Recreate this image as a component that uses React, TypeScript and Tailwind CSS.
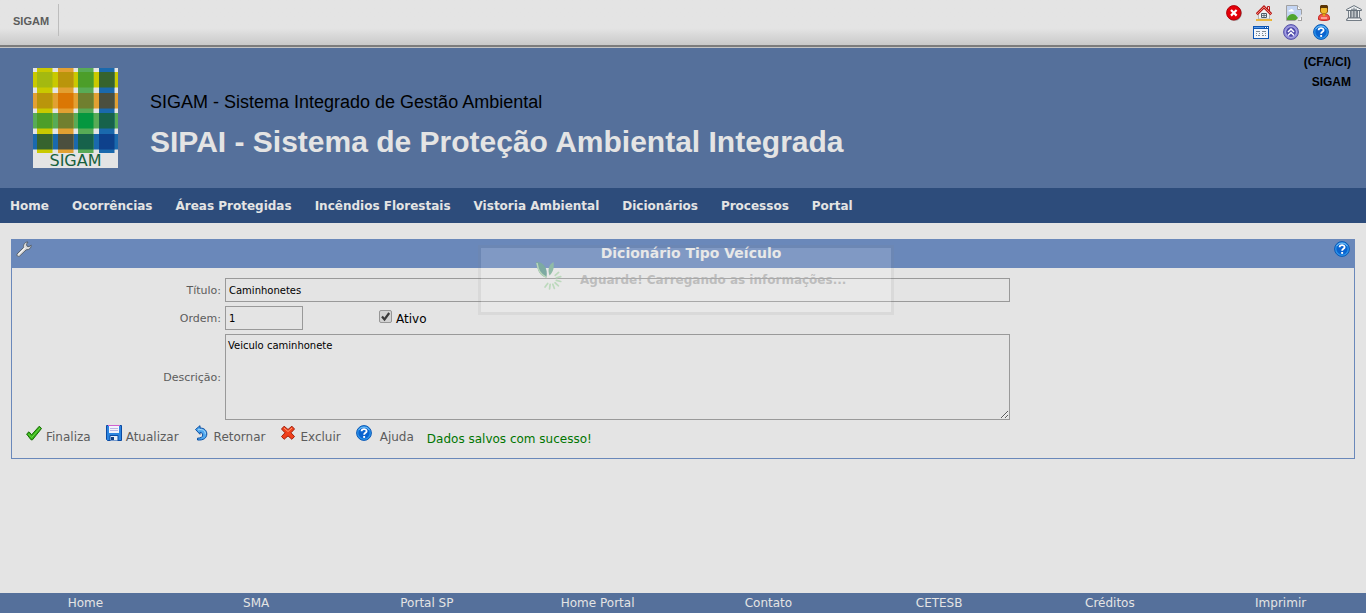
import React from "react";

type IconProps = { className?: string };

const svgBase = {
  width: 16,
  height: 16,
  viewBox: "0 0 16 16",
  fill: "none",
  "aria-hidden": true,
} as const;

function CloseIcon() {
  return (
    <svg {...svgBase}>
      <circle cx="8.4" cy="8.4" r="7.4" fill="#999" />
      <circle cx="7.800" cy="7.800" r="7.200" fill="#e40008" stroke="#b00008" />
      <path d="M5 5l5.600 5.600M10.600 5L5 10.600" stroke="#fff" strokeWidth="2.200" />
    </svg>
  );
}

function HouseIcon() {
  return (
    <svg {...svgBase}>
      <path d="M2.500 8L8 3l5.500 5v6h-11z" fill="#f2f2f2" stroke="#b4b4b4" />
      <path d="M11.500 1.500h2V6l-2-2z" fill="#f8d4d4" stroke="#b51c1c" />
      <path d="M.7 9.300L8 2l7.300 7.300" stroke="#b51c1c" strokeWidth="2.800" />
      <path d="M1 9L8 2l7 7" stroke="#f47a6c" strokeWidth="1" />
      <path d="M5.500 8.500h5v4h-5z" fill="#e6edf2" stroke="#4e5c68" />
      <path d="M8 8.500v4M5.500 10.500h5" stroke="#4e5c68" strokeWidth=".8" />
      <path d="M0 15h16" stroke="#eab02a" strokeWidth="1.800" />
    </svg>
  );
}

function BrokenImageIcon() {
  return (
    <svg {...svgBase}>
      <path d="M.500.500h11l4 4v11H.500z" fill="#c3d4f2" stroke="#a0a0a0" />
      <path d="M11.500.500v4h4" fill="#fafafa" stroke="#a0a0a0" />
      <path d="M2.500 6.500c-.3-1.500 1-1.700 1.500-1.500.6-1.500 2.700-1.300 3 .2 1.200 0 1.300 1.300.6 1.300z" fill="#fff" />
      <path d="M1 13c2-3.600 5.500-5 8.500-3l3 3.500V15H1z" fill="#4fa52f" />
      <path d="M9 16l7-7v2.500L11.500 16z" fill="#e4e4e4" />
      <path d="M12 15.500h3.500V12" fill="#fafafa" stroke="#a0a0a0" />
    </svg>
  );
}

function UserIcon() {
  return (
    <svg {...svgBase}>
      <path d="M2.500 14.500c-.2-3.600 1-5 3-5h5c2 0 3.200 1.400 3 5-2 1.300-9 1.300-11 0z" fill="#f0554c" stroke="#c4231f" />
      <path d="M4.500 2.500h7V6c0 1.500-1 2.500-2 2.500h-3c-1 0-2-1-2-2.500z" fill="#efb92c" stroke="#8f5408" />
      <path d="M4 4V1.500C4 .700 4.800 0 5.800 0h4.400c1 0 1.800.7 1.800 1.500V4l-1.500-1h-5z" fill="#5a3506" />
      <path d="M6.500 8.500h3v1.800L8 11.500l-1.500-1.200z" fill="#e0a11c" />
      <path d="M5 13h6" stroke="#ffb6ae" strokeWidth="1.500" />
    </svg>
  );
}

function BankIcon() {
  return (
    <svg {...svgBase}>
      <path d="M.500 5.500v-1L8 .600l7.500 3.900v1z" fill="#f2f4f5" stroke="#66717b" />
      <path d="M5 4.300h6M8 2.500v2" stroke="#7d8790" />
      <path d="M2.500 6v7h2V6M5.800 6v7h1.600V6M8.800 6v7h1.600V6M11.500 6v7h2V6" fill="#e9ecee" stroke="#66717b" strokeWidth=".9" />
      <path d="M1.500 13h13v1.200h1v1.300H.500v-1.300h1z" fill="#f2f4f5" stroke="#66717b" strokeWidth=".9" />
    </svg>
  );
}

function WindowIcon() {
  return (
    <svg {...svgBase} shapeRendering="crispEdges">
      <path d="M0 2h16v13H0z" fill="#0b55b4" />
      <path d="M1 5h14v9H1z" fill="#f2f6fb" />
      <path d="M1 3h10v1H1z" fill="#5a9be8" />
      <path d="M12 3h1v1h-1zM14 3h1v1h-1z" fill="#fff" />
      <path d="M3 7.500h4M9 7.500h4M3 9.500h1M6 9.500h1M9 9.500h1M12 9.500h1M3 11.500h1M5 11.500h2M9 11.500h2M12 11.500h1" stroke="#7d8a93" />
    </svg>
  );
}

function ChevronsUpIcon() {
  return (
    <svg {...svgBase}>
      <circle cx="8" cy="8" r="7.400" fill="#8f8bd8" stroke="#5450a8" />
      <circle cx="8" cy="8" r="5.400" fill="#504bab" stroke="#b4b1ee" />
      <path d="M5 8l3-3 3 3M5 11.500l3-3 3 3" stroke="#fff" strokeWidth="1.500" />
    </svg>
  );
}

function HelpIcon({ className }: IconProps) {
  return (
    <svg {...svgBase} className={className}>
      <circle cx="8" cy="8" r="7.400" fill="#2a93ea" stroke="#0b57b5" />
      <circle cx="8" cy="8" r="5.600" fill="#0a63cf" />
      <path d="M2.800 5C4.500 1.300 11.500 1.300 13.200 5" stroke="#7cc4f6" />
      <path d="M5.600 6.300C5.600 3.400 10.600 3.400 10.600 6.200 10.600 7.900 8.100 7.700 8.100 9.800" stroke="#fff" strokeWidth="1.800" />
      <path d="M7.200 11h1.900v1.900H7.200z" fill="#fff" />
    </svg>
  );
}

function WrenchIcon() {
  return (
    <svg {...svgBase}>
      <path
        d="M1 13l6.500-6.500C7 3.500 9 .8 12 1L10.500 3.200l.5 2 2 .5L15.200 4c.3 3-2 5-5 4.800L3.500 15.200C2 16 0 14.500 1 13z"
        fill="#dadada"
        stroke="#59636f"
      />
      <path d="M2.500 13.500l7-7" stroke="#fff" strokeWidth=".8" />
    </svg>
  );
}

function CheckIcon() {
  return (
    <svg {...svgBase}>
      <path d="M.6 9L3 6.800l2.600 3L13.300 1.200l2.200 2.300L6.500 14.800H5z" fill="#36b416" stroke="#176a06" />
      <path d="M2.500 9l3.200 3.500L14 3" stroke="#7ee05a" strokeWidth=".8" />
    </svg>
  );
}

function DiskIcon() {
  return (
    <svg {...svgBase}>
      <path d="M.500.500h15v15h-14l-1-1z" fill="#2b84e0" stroke="#0b4aa2" />
      <path d="M3 0h10v8H3z" fill="#f3f2fb" />
      <path d="M2 .5h12" stroke="#d060d0" />
      <path d="M4 3.500h8M4 5.500h8" stroke="#b9b6e4" />
      <path d="M4 10.500h8V16H4z" fill="#e8eef8" stroke="#0b4aa2" />
      <path d="M5 12h3v3H5z" fill="#123f84" />
    </svg>
  );
}

function ReturnIcon() {
  return (
    <svg {...svgBase}>
      <path
        d="M1.500 4.500L6 .700v2.300c4.500 0 6.800 2.800 6.800 6 0 4-3.300 6.500-9.300 6v-1.800c3.600-.2 5.200-1.200 5.200-3.200 0-1.500-1-2.600-2.700-2.700v2z"
        fill="#4fa8ee"
        stroke="#0b4fa4"
      />
      <path d="M4 4.800c5-1 7.500 1 7.300 4.500" stroke="#b6defb" strokeWidth=".9" />
    </svg>
  );
}

function DeleteIcon() {
  return (
    <svg {...svgBase}>
      <path
        d="M4.100 1.200L8 4.500l3.900-3.300L14.500 4 11 7.800l3.500 3.700-2.600 2.800L8 10.900l-3.900 3.400-2.600-2.800L5 7.800 1.500 4z"
        fill="#f0401c"
        stroke="#a3200c"
        strokeLinejoin="round"
      />
      <path d="M4 3l4 3.500L12 3" stroke="#ff9c74" />
    </svg>
  );
}

function LeafSpinner() {
  const rays = [-35, -8, 20, 48, 76, 104, 132];
  return (
    <svg width="28" height="28" viewBox="0 0 28 28" aria-hidden="true">
      <path d="M0 0c8 0 12 6 10.500 15.500C3.500 14 1.500 8 0 0z" fill="#7daaa2" />
      <path d="M1 1c1 7 3 11 9.500 14.500" stroke="#b9d6b9" strokeWidth="1.500" fill="none" />
      <path d="M17.500 0c-5 3-6 8-4 13.500C17 10 18.500 6 17.500 0z" fill="#8fbba6" />
      {rays.map((angle) => (
        <path
          key={angle}
          d="M20.500 16.500L25 16"
          stroke="#bcd9bc"
          strokeWidth="1.700"
          strokeLinecap="round"
          transform={`rotate(${angle} 15 17)`}
        />
      ))}
    </svg>
  );
}

const stripes = [
  { pos: 4, color: "#c9c900" },
  { pos: 25, color: "#e2a032" },
  { pos: 45, color: "#58ab56" },
  { pos: 66, color: "#1a69ad" },
];

const crossings = [
  ["#a4b910", "#ba950b", "#4c9e29", "#36632e"],
  ["#ba950b", "#db7704", "#707f2f", "#4b4f3e"],
  ["#4c9e29", "#707f2f", "#05973f", "#17624b"],
  ["#36632e", "#4b4f3e", "#17624b", "#0e418c"],
];

function Logo() {
  return (
    <div className="h-[100px] w-[85px] bg-[#e4e4e4]">
      <svg width="85" height="85" viewBox="0 0 85 85" className="block" aria-hidden="true">
        {stripes.map((s) => (
          <rect key={`h${s.pos}`} x="0" y={s.pos} width="85" height="15.500" fill={s.color} />
        ))}
        {stripes.map((s) => (
          <rect key={`v${s.pos}`} x={s.pos} y="0" width="15.500" height="85" fill={s.color} />
        ))}
        {crossings.map((row, r) =>
          row.map((color, c) => (
            <rect
              key={`${r}-${c}`}
              x={stripes[c].pos}
              y={stripes[r].pos}
              width="15.500"
              height="15.500"
              fill={color}
            />
          )),
        )}
      </svg>
      <p className="text-center font-['DejaVu_Sans',sans-serif] text-base leading-4 text-[#17603c]">SIGAM</p>
    </div>
  );
}

const menu = [
  "Home",
  "Ocorrências",
  "Áreas Protegidas",
  "Incêndios Florestais",
  "Vistoria Ambiental",
  "Dicionários",
  "Processos",
  "Portal",
];

const footerLinks = ["Home", "SMA", "Portal SP", "Home Portal", "Contato", "CETESB", "Créditos", "Imprimir"];

const toolbar = [
  [
    { label: "Sair", icon: <CloseIcon /> },
    { label: "Início", icon: <HouseIcon /> },
    { label: "Imagem", icon: <BrokenImageIcon /> },
    { label: "Usuário", icon: <UserIcon /> },
    { label: "Instituição", icon: <BankIcon /> },
  ],
  [
    { label: "Janela", icon: <WindowIcon /> },
    { label: "Recolher", icon: <ChevronsUpIcon /> },
    { label: "Ajuda", icon: <HelpIcon /> },
  ],
];

const actions = [
  { label: "Finaliza", icon: <CheckIcon /> },
  { label: "Atualizar", icon: <DiskIcon /> },
  { label: "Retornar", icon: <ReturnIcon /> },
  { label: "Excluir", icon: <DeleteIcon /> },
  { label: "Ajuda", icon: <HelpIcon className="mr-1" /> },
];

const fieldClass = "border border-[#999] bg-[#e4e4e4] text-[10px] text-black outline-none";

export default function App() {
  return (
    <div className="flex min-h-screen flex-col bg-[#e4e4e4] font-['DejaVu_Sans',sans-serif] text-xs text-[#5c5c5c]">
      <header className="flex h-12 items-start justify-between border-b border-[#c4c4c4] bg-linear-to-b from-[#e4e4e4] from-60% to-[#c6c6c6] font-['Liberation_Sans',sans-serif] shadow-[inset_0_-2px_0_#7c7c7c]">
        <div className="mt-1 flex h-8 items-center border-r border-[#bdbdbd] pr-[9px] pl-[13px] text-[11px] font-bold">
          <a href="#sigam" className="pt-0.5">SIGAM</a>
        </div>
        <div className="flex flex-col items-end gap-[3px] pt-[5px] pr-1">
          {toolbar.map((row, i) => (
            <div key={i} className={i === 0 ? "flex gap-3.5" : "flex gap-3.5 pr-[33px]"}>
              {row.map((item) => (
                <button key={item.label} type="button" aria-label={item.label}>
                  {item.icon}
                </button>
              ))}
            </div>
          ))}
        </div>
      </header>

      <section className="flex h-[140px] items-start justify-between bg-[#55709b] pr-[15px] pl-[33px] font-['Liberation_Sans',sans-serif]">
        <div className="flex gap-8 pt-5">
          <Logo />
          <div className="pt-[22px]">
            <p className="text-[18px] leading-6 text-black">SIGAM - Sistema Integrado de Gestão Ambiental</p>
            <h1 className="pt-2.5 text-[30px] leading-9 font-bold text-[#e4e4e4]">
              SIPAI - Sistema de Proteção Ambiental Integrada
            </h1>
          </div>
        </div>
        <div className="pt-1 text-right text-xs leading-5 font-bold text-black">
          <p>(CFA/CI)</p>
          <p>SIGAM</p>
        </div>
      </section>

      <nav className="flex h-[35px] items-center gap-[23px] bg-[#2d4c7b] pl-2.5 font-bold text-[#e4e4e4]">
        {menu.map((item) => (
          <a key={item} href="#menu">{item}</a>
        ))}
      </nav>

      <main className="relative mx-[11px] mt-4 mb-6 border border-[#6a88ba]">
        <div className="flex h-7 items-start justify-between bg-[#6a88ba] px-1 pt-px">
          <WrenchIcon />
          <h2 className="pt-0.5 pl-4 text-sm leading-5 font-bold text-[#e4e4e4]">Dicionário Tipo Veículo</h2>
          <button type="button" aria-label="Ajuda">
            <HelpIcon />
          </button>
        </div>

        <form onSubmit={(e) => e.preventDefault()}>
          <div className="grid grid-cols-[209fr_785fr_340fr] items-center gap-1 pt-2.5 text-[11px]">
            <label htmlFor="titulo" className="pt-0.5 text-right">Título:</label>
            <input id="titulo" defaultValue="Caminhonetes" className={`${fieldClass} h-6 px-[3px]`} />
            <span />

            <label htmlFor="ordem" className="pt-0.5 text-right">Ordem:</label>
            <div className="flex h-6">
              <input id="ordem" defaultValue="1" className={`${fieldClass} h-6 w-[78px] px-[3px]`} />
              <label className="ml-[76px] flex items-center gap-1 text-xs text-black">
                <span className="relative -mt-1 h-[13px] w-[13px]">
                  <input
                    type="checkbox"
                    defaultChecked
                    className="peer block h-[13px] w-[13px] appearance-none rounded-xs border border-[#969696] bg-[#d2d2d2]"
                  />
                  <svg
                    viewBox="0 0 13 13"
                    className="pointer-events-none absolute inset-0 hidden peer-checked:block"
                    aria-hidden="true"
                  >
                    <path d="M3 6.500l2.500 3L10.200 3" fill="none" stroke="#3a3a3a" strokeWidth="2.200" />
                  </svg>
                </span>
                <span className="pt-0.5">Ativo</span>
              </label>
            </div>
            <span />

            <label htmlFor="descricao" className="pt-0.5 text-right">Descrição:</label>
            <textarea
              id="descricao"
              defaultValue="Veiculo caminhonete"
              className={`${fieldClass} block h-[86px] px-0.5 py-[5px] leading-3`}
            />
            <span />
          </div>

          <div className="flex h-[38px] items-start gap-[15px] pt-[5px] pl-3.5 text-[#5c5c5c]">
            {actions.map((action) => (
              <button key={action.label} type="button" className="flex gap-1">
                {action.icon}
                <span className="pt-1 leading-4">{action.label}</span>
              </button>
            ))}
            <p className="-ml-0.5 pt-1.5 leading-4 text-[#007500]" role="status">
              Dados salvos com sucesso!
            </p>
          </div>
        </form>

        <div className="pointer-events-none absolute inset-x-0 top-[5px] flex justify-center">
          <div className="ml-1.5 flex h-[70px] w-[416px] gap-4 border-3 border-[#808080]/10 bg-white/15 bg-clip-padding pt-3.5 pl-[55px]">
            <LeafSpinner />
            <p className="pt-2.5 leading-4 font-bold text-[#aaaaaa]/70">Aguarde! Carregando as informações...</p>
          </div>
        </div>
      </main>

      <footer className="mt-auto grid h-5 grid-cols-8 bg-[#55709b] text-center leading-5 text-[#e4e4e4]">
        {footerLinks.map((item) => (
          <a key={item} href="#rodape">{item}</a>
        ))}
      </footer>
    </div>
  );
}
